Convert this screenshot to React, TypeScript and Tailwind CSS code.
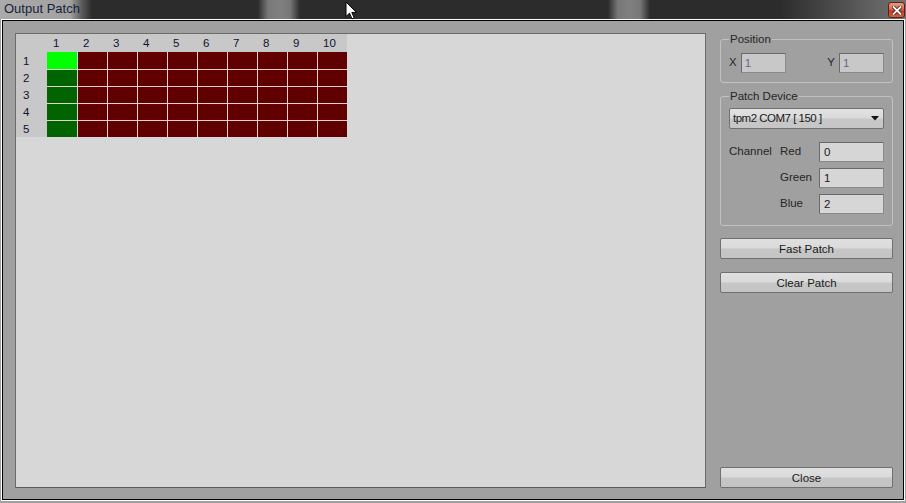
import React from "react";
import clsx from "clsx";

const cols = [1, 2, 3, 4, 5, 6, 7, 8, 9, 10];
const rows = [1, 2, 3, 4, 5];

function cellColor(r: number, c: number) {
  if (c === 1 && r === 1) return "bg-[#00ff00]";
  if (c === 1) return "bg-[#006400]";
  return "bg-[#600000]";
}

function PatchGrid() {
  return (
    <div className="flex flex-col w-[331px] bg-[#c8c8c8] text-[#12122e] text-[11.5px]">
      <div className="flex h-[18px]">
        <div className="w-[31px]" />
        {cols.map((c) => (
          <div key={c} className="w-[30px] pl-[6px] leading-[19px]">
            {c}
          </div>
        ))}
      </div>
      {rows.map((r) => (
        <div key={r} className="flex h-[17px]">
          <div className="w-[31px] pl-[7px] leading-[18px]">{r}</div>
          {cols.map((c) => (
            <div
              key={c}
              className={clsx(
                "w-[30px] h-full border-[#e4d2d2]",
                c > 1 && "border-l",
                r > 1 && "border-t",
                cellColor(r, c)
              )}
            />
          ))}
        </div>
      ))}
    </div>
  );
}

function Btn({ label, className }: { label: string; className?: string }) {
  return (
    <button
      className={clsx(
        "h-[21px] w-full border border-[#707070] rounded-[2px] text-[11.5px] leading-[20px] text-[#1a1a1a] bg-[linear-gradient(#e0e0e0_0%,#dadada_48%,#c6c6c6_52%,#c4c4c4_100%)]",
        className
      )}
    >
      {label}
    </button>
  );
}

function TextBox({ value, className }: { value: string; className?: string }) {
  return (
    <div
      className={clsx(
        "h-[20px] border border-[#6a6a6a] border-r-[#8a8a8a] border-b-[#8a8a8a] pl-[3px] leading-[18px] text-[11.5px]",
        className
      )}
    >
      {value}
    </div>
  );
}

function Group({ title, className, children }: { title: string; className?: string; children: React.ReactNode }) {
  return (
    <fieldset className={clsx("border border-[#c2c2c2] rounded-[3px] px-[8px]", className)}>
      <legend className="px-[1px] text-[11.5px] leading-[13px] text-[#262626]">{title}</legend>
      {children}
    </fieldset>
  );
}

function CloseIcon() {
  return (
    <div className="w-[17px] h-[16px] mt-[2px] mr-[1px] rounded-[3px] border border-[#5b2412] bg-[linear-gradient(#e89a82_0%,#d8684c_45%,#c23e22_55%,#d4603e_100%)] flex items-center justify-center">
      <svg width="10" height="9" viewBox="0 0 10 9">
        <path d="M1.5 1 L8.5 8 M8.5 1 L1.5 8" stroke="#3a1a12" strokeWidth="3.4" strokeLinecap="square" />
        <path d="M1.5 1 L8.5 8 M8.5 1 L1.5 8" stroke="#ffffff" strokeWidth="1.8" strokeLinecap="square" />
      </svg>
    </div>
  );
}

function Cursor() {
  return (
    <svg className="absolute left-[345px] top-[1px]" width="13" height="19" viewBox="0 0 13 19">
      <path
        d="M1 1 L1 15.5 L4.5 12.2 L7 17.8 L9.2 16.8 L6.8 11.4 L11.5 11.4 Z"
        fill="#ffffff"
        stroke="#000000"
        strokeWidth="1"
      />
    </svg>
  );
}

export default function App() {
  return (
    <div className="relative w-[906px] h-[503px] flex flex-col bg-[#a0a0a0] font-['Liberation_Sans',Arial,sans-serif] overflow-hidden">
      <div className="h-[19px] flex justify-between bg-[linear-gradient(90deg,#aaaaaa_0px,#a2a2a2_70px,#5a5a5a_82px,#2c2c2c_92px,#2c2c2c_258px,#787878_268px,#808080_280px,#787878_290px,#2c2c2c_300px,#2c2c2c_608px,#787878_618px,#808080_630px,#787878_640px,#2c2c2c_650px,#2c2c2c_780px,#5a5a5a_860px,#737373_906px)]">
        <span className="pl-[4px] text-[13px] leading-[18px] text-[#18223a]">Output Patch</span>
        <CloseIcon />
      </div>
      <Cursor />
      <div className="flex-1 flex flex-col px-[1px] pb-[2px]">
        <div className="flex-1 flex flex-col border border-white">
          <div className="flex-1 flex border border-black pt-[12px] pb-[11px] pl-[12px] pr-[10px] gap-[14px]">
            <div className="flex-1 border border-[#6b6b6b] border-b-[#5a5a5a] bg-[#d7d7d7]">
              <PatchGrid />
            </div>
            <div className="w-[173px] flex flex-col">
              <Group title="Position" className="pb-[9px]">
                <div className="flex justify-between items-center pt-[7px]">
                  <div className="flex items-center gap-[4px]">
                    <span className="text-[11.5px] text-[#262626]">X</span>
                    <TextBox value="1" className="w-[45px] bg-[#c8c8c8] text-[#66668a]" />
                  </div>
                  <div className="flex items-center gap-[4px]">
                    <span className="text-[11.5px] text-[#262626]">Y</span>
                    <TextBox value="1" className="w-[45px] bg-[#c8c8c8] text-[#66668a]" />
                  </div>
                </div>
              </Group>
              <Group title="Patch Device" className="mt-[7px] pb-[11px]">
                <div className="mt-[5px] h-[21px] w-[155px] border border-[#707070] rounded-[2px] flex items-center justify-between pl-[3px] pr-[4px] bg-[linear-gradient(#e2e2e2_0%,#dadada_48%,#c8c8c8_52%,#c6c6c6_100%)]">
                  <span className="text-[11.5px] tracking-[-0.5px] text-[#1a1a1a]">tpm2 COM7 [ 150 ]</span>
                  <svg width="8" height="5" viewBox="0 0 8 5">
                    <path d="M0 0 L8 0 L4 4.5 Z" fill="#101010" />
                  </svg>
                </div>
                <div className="mt-[13px] grid grid-cols-[51px_39px_65px] gap-y-[6px] items-center text-[11.5px] text-[#262626]">
                  <span>Channel</span>
                  <span>Red</span>
                  <TextBox value="0" className="bg-[#d6d6d6] text-[#1a1a1a] pl-[4px]" />
                  <span />
                  <span>Green</span>
                  <TextBox value="1" className="bg-[#d6d6d6] text-[#1a1a1a] pl-[4px]" />
                  <span />
                  <span>Blue</span>
                  <TextBox value="2" className="bg-[#d6d6d6] text-[#1a1a1a] pl-[4px]" />
                </div>
              </Group>
              <Btn label="Fast Patch" className="mt-[12px]" />
              <Btn label="Clear Patch" className="mt-[13px]" />
              <Btn label="Close" className="mt-auto" />
            </div>
          </div>
        </div>
      </div>
    </div>
  );
}
